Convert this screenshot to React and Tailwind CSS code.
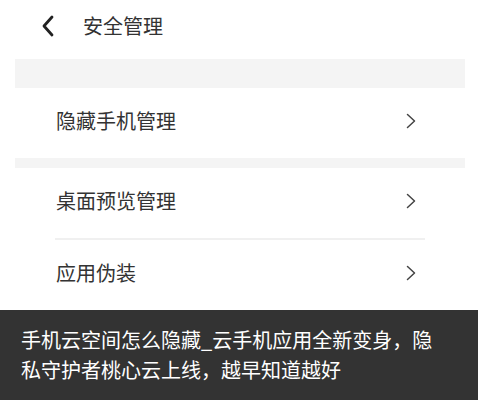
import React from "react";

const font = { fontFamily: '"Noto Sans CJK SC", "Noto Sans", sans-serif' };

function Chevron() {
  return (
    <svg width="12" height="16" viewBox="0 0 12 16" className="shrink-0">
      <path d="M2.5 1.5 L9.5 8 L2.5 14.5" fill="none" stroke="#444" strokeWidth="1.5" strokeLinecap="round" strokeLinejoin="round" />
    </svg>
  );
}

function Row({ label, divider }) {
  return (
    <div className="flex flex-col">
      <div className="flex h-[70px] items-center justify-between pb-[4px] pl-[41px] pr-[48px]">
        <span className="text-[20px] leading-none text-[#333]">{label}</span>
        <Chevron />
      </div>
      {divider && <div className="ml-[40px] mr-[40px] h-[2px] bg-[#f0f0f0]" />}
    </div>
  );
}

export default function App() {
  return (
    <div className="relative h-[400px] w-[478px] overflow-hidden bg-white" style={font}>
      <div className="flex h-[59px] items-center gap-[27px] pb-[8px] pl-[40px]">
        <svg width="16" height="22" viewBox="0 0 16 22">
          <path d="M12 2 L4 11 L12 20" fill="none" stroke="#222" strokeWidth="2.8" strokeLinecap="round" strokeLinejoin="round" />
        </svg>
        <span className="text-[20px] leading-none text-[#333]">安全管理</span>
      </div>
      <div className="pl-[15px] pr-[13px]">
        <div className="h-[29px] bg-[#f4f4f4]" />
        <Row label="隐藏手机管理" />
        <div className="h-[10px] bg-[#f4f4f4]" />
        <Row label="桌面预览管理" divider />
        <Row label="应用伪装" />
        <div className="h-[10px] bg-[#f4f4f4]" />
      </div>
      <div className="absolute bottom-0 left-0 right-0 h-[90px] bg-[#333333] pl-[21px] pr-[38px] pt-[15px]">
        <p className="text-[20px] leading-[30px] text-white">
          手机云空间怎么隐藏_云手机应用全新变身，隐私守护者桃心云上线，越早知道越好
        </p>
      </div>
    </div>
  );
}
